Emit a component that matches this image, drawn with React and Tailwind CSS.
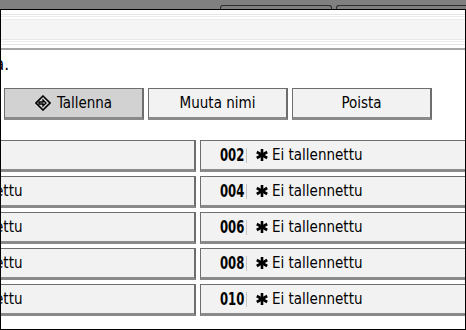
import React from "react";

const rows = [
  { left: "", right: "002" },
  { left: "Ei tallennettu", right: "004" },
  { left: "Ei tallennettu", right: "006" },
  { left: "Ei tallennettu", right: "008" },
  { left: "Ei tallennettu", right: "010" },
];

const leftNums = ["001", "003", "005", "007", "009"];

// store icon: diamond with an arrow going in
const StoreIcon = () => (
  <svg width="16" height="16" viewBox="0 0 16 16" className="shrink-0">
    <path d="M8 1 L15 8 L8 15 L1 8 Z" fill="none" stroke="#000" strokeWidth="1.6" />
    <path d="M4 7 H8 V5 L11 8 L8 11 V9 H4 Z" fill="none" stroke="#000" strokeWidth="1.3" strokeLinejoin="miter" />
  </svg>
);

const Star = () => (
  <svg width="12" height="12" viewBox="0 0 12 12" className="shrink-0">
    <g stroke="#000" strokeWidth="2.6" strokeLinecap="butt">
      <line x1="6" y1="0" x2="6" y2="12" />
      <line x1="0.8" y1="3" x2="11.2" y2="9" />
      <line x1="0.8" y1="9" x2="11.2" y2="3" />
    </g>
  </svg>
);

const Slot = ({ num, label }) => (
  <div className="h-[32px] bg-[#f2f2f2] border border-[#6e6e6e] border-r-[2px] border-b-[3px] border-b-[#8a8a8a] flex items-center pl-[19px]">
    <span className="w-[26px] h-[18px] flex items-center overflow-visible">
      <span className="inline-block origin-left scale-x-[0.72] text-[18px] font-bold leading-none whitespace-nowrap">
        {num}
      </span>
    </span>
    <span className="w-px h-[15px] bg-[#c4c4c4] mr-[9px]" />
    {label !== "" && (
      <>
        <Star />
        <span className="ml-[4px] text-[15px] leading-none">{label}</span>
      </>
    )}
  </div>
);

const Button = ({ children, active }) => (
  <div
    className={`w-[140px] h-[32px] flex items-center justify-center gap-[6px] text-[15px] border border-[#6e6e6e] border-r-[2px] border-b-[3px] border-b-[#8a8a8a] ${
      active ? "bg-[#d2d2d2]" : "bg-[#f2f2f2]"
    }`}
  >
    {children}
  </div>
);

export default function App() {
  return (
    <div
      className="w-[466px] h-[330px] bg-white overflow-hidden flex flex-col text-black"
      style={{ fontFamily: '"DejaVu Sans", sans-serif', fontStretch: "condensed" }}
    >
      {/* top tab strip */}
      <div className="h-[9px] bg-[#808080] flex items-end pl-[220px] gap-[4px] shrink-0">
        <div className="w-[112px] h-[4px] border border-b-0 border-[#2e2e2e] rounded-t-[3px]" />
        <div className="flex-1 h-[4px] border border-b-0 border-r-0 border-[#2e2e2e] rounded-tl-[3px]" />
      </div>
      <div className="h-px bg-black shrink-0" />

      <div className="flex-1 border-l border-r border-b border-black flex flex-col overflow-hidden">
        {/* title area stripes */}
        <div className="shrink-0 flex flex-col">
          <div className="h-[4px] bg-white" />
          <div className="h-px bg-[#e6e6e6]" />
          <div className="h-px bg-white" />
          <div className="h-px bg-[#ececec]" />
          <div className="h-[2px] bg-white" />
          <div className="h-px bg-[#ededed]" />
          <div className="h-[19px] bg-[#f5f5f5]" />
          <div className="h-px bg-[#e6e6e6]" />
          <div className="h-px bg-white" />
          <div className="h-px bg-[#ececec]" />
          <div className="h-[2px] bg-white" />
          <div className="h-px bg-[#e6e6e6]" />
          <div className="h-[3px] bg-white" />
          <div className="h-[2px] bg-[#a6a6a6]" />
        </div>

        {/* instruction line, cut off on the left */}
        <div className="h-[17px] mt-[6px] w-[8px] flex justify-end whitespace-nowrap text-[17px] leading-[17px]">
          Paina Tallenna.
        </div>

        {/* action buttons */}
        <div className="flex gap-[4px] pl-[3px] mt-[15px]">
          <Button active>
            <StoreIcon />
            <span>Tallenna</span>
          </Button>
          <Button>Muuta nimi</Button>
          <Button>Poista</Button>
        </div>

        {/* program slots */}
        <div className="ml-[-141px] mt-[20px] grid grid-cols-[336px_336px] gap-[4px]">
          {rows.map((r, i) => (
            <React.Fragment key={r.right}>
              <Slot num={leftNums[i]} label={i === 0 ? "" : r.left} />
              <Slot num={r.right} label="Ei tallennettu" />
            </React.Fragment>
          ))}
        </div>
      </div>
    </div>
  );
}
